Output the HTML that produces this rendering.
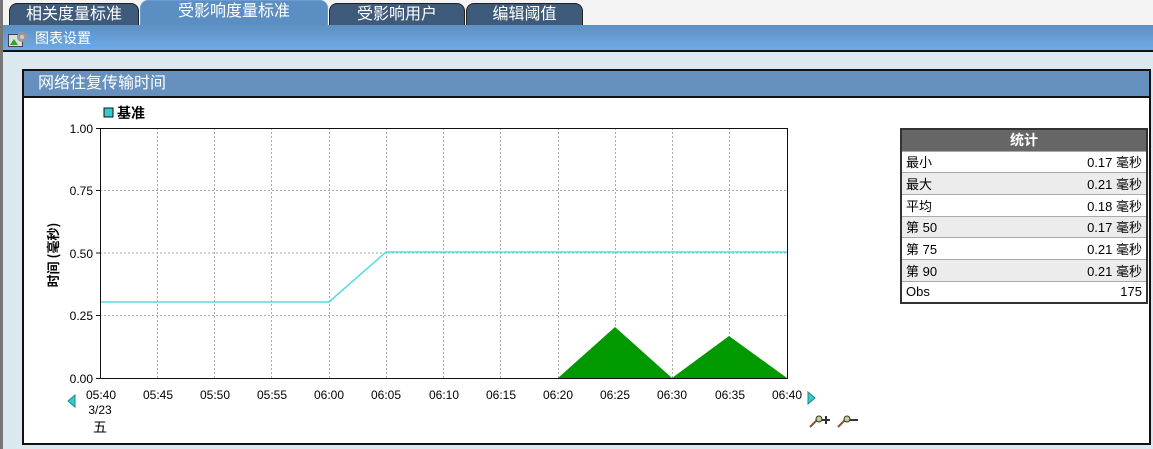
<!DOCTYPE html>
<html><head><meta charset="utf-8"><style>
*{margin:0;padding:0;box-sizing:border-box}
body{width:1153px;height:449px;overflow:hidden;background:#dce8f0;font-family:"Liberation Sans","Noto Sans CJK SC",sans-serif;position:relative}
.lb{position:absolute;left:0;top:0;width:3px;height:449px;background:#777}
.tabbar{position:absolute;left:3px;top:0;width:1150px;height:26px;background:#f4f4f4}
.tab{position:absolute;top:3px;height:23px;background:#3d5a7a;color:#fff;border:1px solid #222;border-bottom:none;border-radius:8px 8px 0 0;font-size:16px;text-align:center;line-height:22px}
.tab.act{top:0;height:26px;background:#5b8fc4;border-color:#6b9bd0}
.tb{position:absolute;left:3px;top:25px;width:1150px;height:27px;background:linear-gradient(#5e90c3,#6eaae6);border-bottom:2px solid #111;color:#fff;font-size:14px;line-height:26px;padding-left:32px}
.panel{position:absolute;left:22px;top:69px;width:1129px;height:376px;border:2px solid #111;background:#fff}
.ph{height:27px;background:#6690bd;border-bottom:2px solid #111;color:#fff;font-size:16px;line-height:26px;padding-left:14px}
table{position:absolute;left:900px;top:128px;width:248px;border-collapse:collapse;border:2px solid #333;font-size:13px}
td{height:21.7px;padding:0 4px;border-top:1px solid #aaa}
th{background:#666;color:#fff;height:22px;font-size:14px}
.r{text-align:right}
tr.g td{background:#ececec}
</style></head><body>
<div class="lb"></div>
<div class="tabbar">
<div class="tab" style="left:6px;width:130px">相关度量标准</div>
<div class="tab act" style="left:137px;width:188px">受影响度量标准</div>
<div class="tab" style="left:326px;width:136px">受影响用户</div>
<div class="tab" style="left:463px;width:117px">编辑阈值</div>
</div>
<div class="tb">图表设置</div>
<svg style="position:absolute;left:8px;top:31px" width="20" height="16"><rect x="0.5" y="3.5" width="14" height="12" fill="#ddd" stroke="#444"/><path d="M2 14 L6 8 L10 14Z" fill="#2a2"/><circle cx="14" cy="6" r="5" fill="#999"/><circle cx="14" cy="6" r="2" fill="#ccc"/></svg>
<div class="panel"><div class="ph">网络往复传输时间</div></div>
<svg style="position:absolute;left:0;top:0" width="900" height="449" font-family="Liberation Sans" font-size="12">
<rect x="104" y="108" width="9" height="9" fill="#3cc" stroke="#111"/>
<text x="117" y="118" font-size="14" font-weight="bold" font-family="Noto Sans CJK SC">基准</text>
<g stroke="#aaa" stroke-dasharray="2,2">
<line x1="100" y1="190.5" x2="787" y2="190.5"/><line x1="100" y1="253" x2="787" y2="253"/><line x1="100" y1="315.5" x2="787" y2="315.5"/>
<line x1="157.5" y1="128" x2="157.5" y2="378"/><line x1="214.5" y1="128" x2="214.5" y2="378"/><line x1="271.5" y1="128" x2="271.5" y2="378"/><line x1="329.5" y1="128" x2="329.5" y2="378"/><line x1="386.5" y1="128" x2="386.5" y2="378"/><line x1="443.5" y1="128" x2="443.5" y2="378"/><line x1="500.5" y1="128" x2="500.5" y2="378"/><line x1="558.5" y1="128" x2="558.5" y2="378"/><line x1="615.5" y1="128" x2="615.5" y2="378"/><line x1="672.5" y1="128" x2="672.5" y2="378"/><line x1="729.5" y1="128" x2="729.5" y2="378"/>
</g>
<path d="M558 378 L615 327 L672 378 L729 336 L787 378Z" fill="#090"/>
<path d="M100 302 L329 302 L386 252 L787 252" fill="none" stroke="#5dd" stroke-width="1.5"/>
<rect x="100.5" y="128.5" width="687" height="250" fill="none" stroke="#111"/>
<g stroke="#111"><line x1="96" y1="128.5" x2="100" y2="128.5"/><line x1="96" y1="190.5" x2="100" y2="190.5"/><line x1="96" y1="253" x2="100" y2="253"/><line x1="96" y1="315.5" x2="100" y2="315.5"/><line x1="96" y1="378.5" x2="100" y2="378.5"/></g>
<g text-anchor="end"><text x="93" y="133">1.00</text><text x="93" y="195">0.75</text><text x="93" y="258">0.50</text><text x="93" y="320">0.25</text><text x="93" y="383">0.00</text></g>
<g text-anchor="middle"><text x="101" y="399">05:40</text><text x="158" y="399">05:45</text><text x="215" y="399">05:50</text><text x="272" y="399">05:55</text><text x="329" y="399">06:00</text><text x="386" y="399">06:05</text><text x="444" y="399">06:10</text><text x="501" y="399">06:15</text><text x="558" y="399">06:20</text><text x="615" y="399">06:25</text><text x="672" y="399">06:30</text><text x="730" y="399">06:35</text><text x="787" y="399">06:40</text>
<text x="100" y="414">3/23</text><text x="100" y="432" font-size="14" font-family="Noto Sans CJK SC">五</text></g>
<path d="M75 395 L68 401 L75 407Z" fill="#3cc" stroke="#288"/>
<path d="M808 392 L815 398 L808 404Z" fill="#3cc" stroke="#288"/>
<text transform="translate(58,255) rotate(-90)" text-anchor="middle" font-size="13" font-weight="bold" font-family="Noto Sans CJK SC">时间 (毫秒)</text>
<g stroke="#853" stroke-width="2"><line x1="810" y1="427" x2="817" y2="420"/><line x1="838" y1="427" x2="845" y2="420"/></g>
<circle cx="819" cy="419" r="3" fill="#cc8" stroke="#333"/><circle cx="847" cy="419" r="3" fill="#cc8" stroke="#333"/>
<path d="M822 420h8M826 416v8" stroke="#333" stroke-width="2"/><path d="M850 420h8" stroke="#333" stroke-width="2"/>
</svg>
<table>
<tr><th colspan="2">统计</th></tr>
<tr><td>最小</td><td class="r">0.17 毫秒</td></tr>
<tr class="g"><td>最大</td><td class="r">0.21 毫秒</td></tr>
<tr><td>平均</td><td class="r">0.18 毫秒</td></tr>
<tr class="g"><td>第 50</td><td class="r">0.17 毫秒</td></tr>
<tr><td>第 75</td><td class="r">0.21 毫秒</td></tr>
<tr class="g"><td>第 90</td><td class="r">0.21 毫秒</td></tr>
<tr><td>Obs</td><td class="r">175</td></tr>
</table>
</body></html>
